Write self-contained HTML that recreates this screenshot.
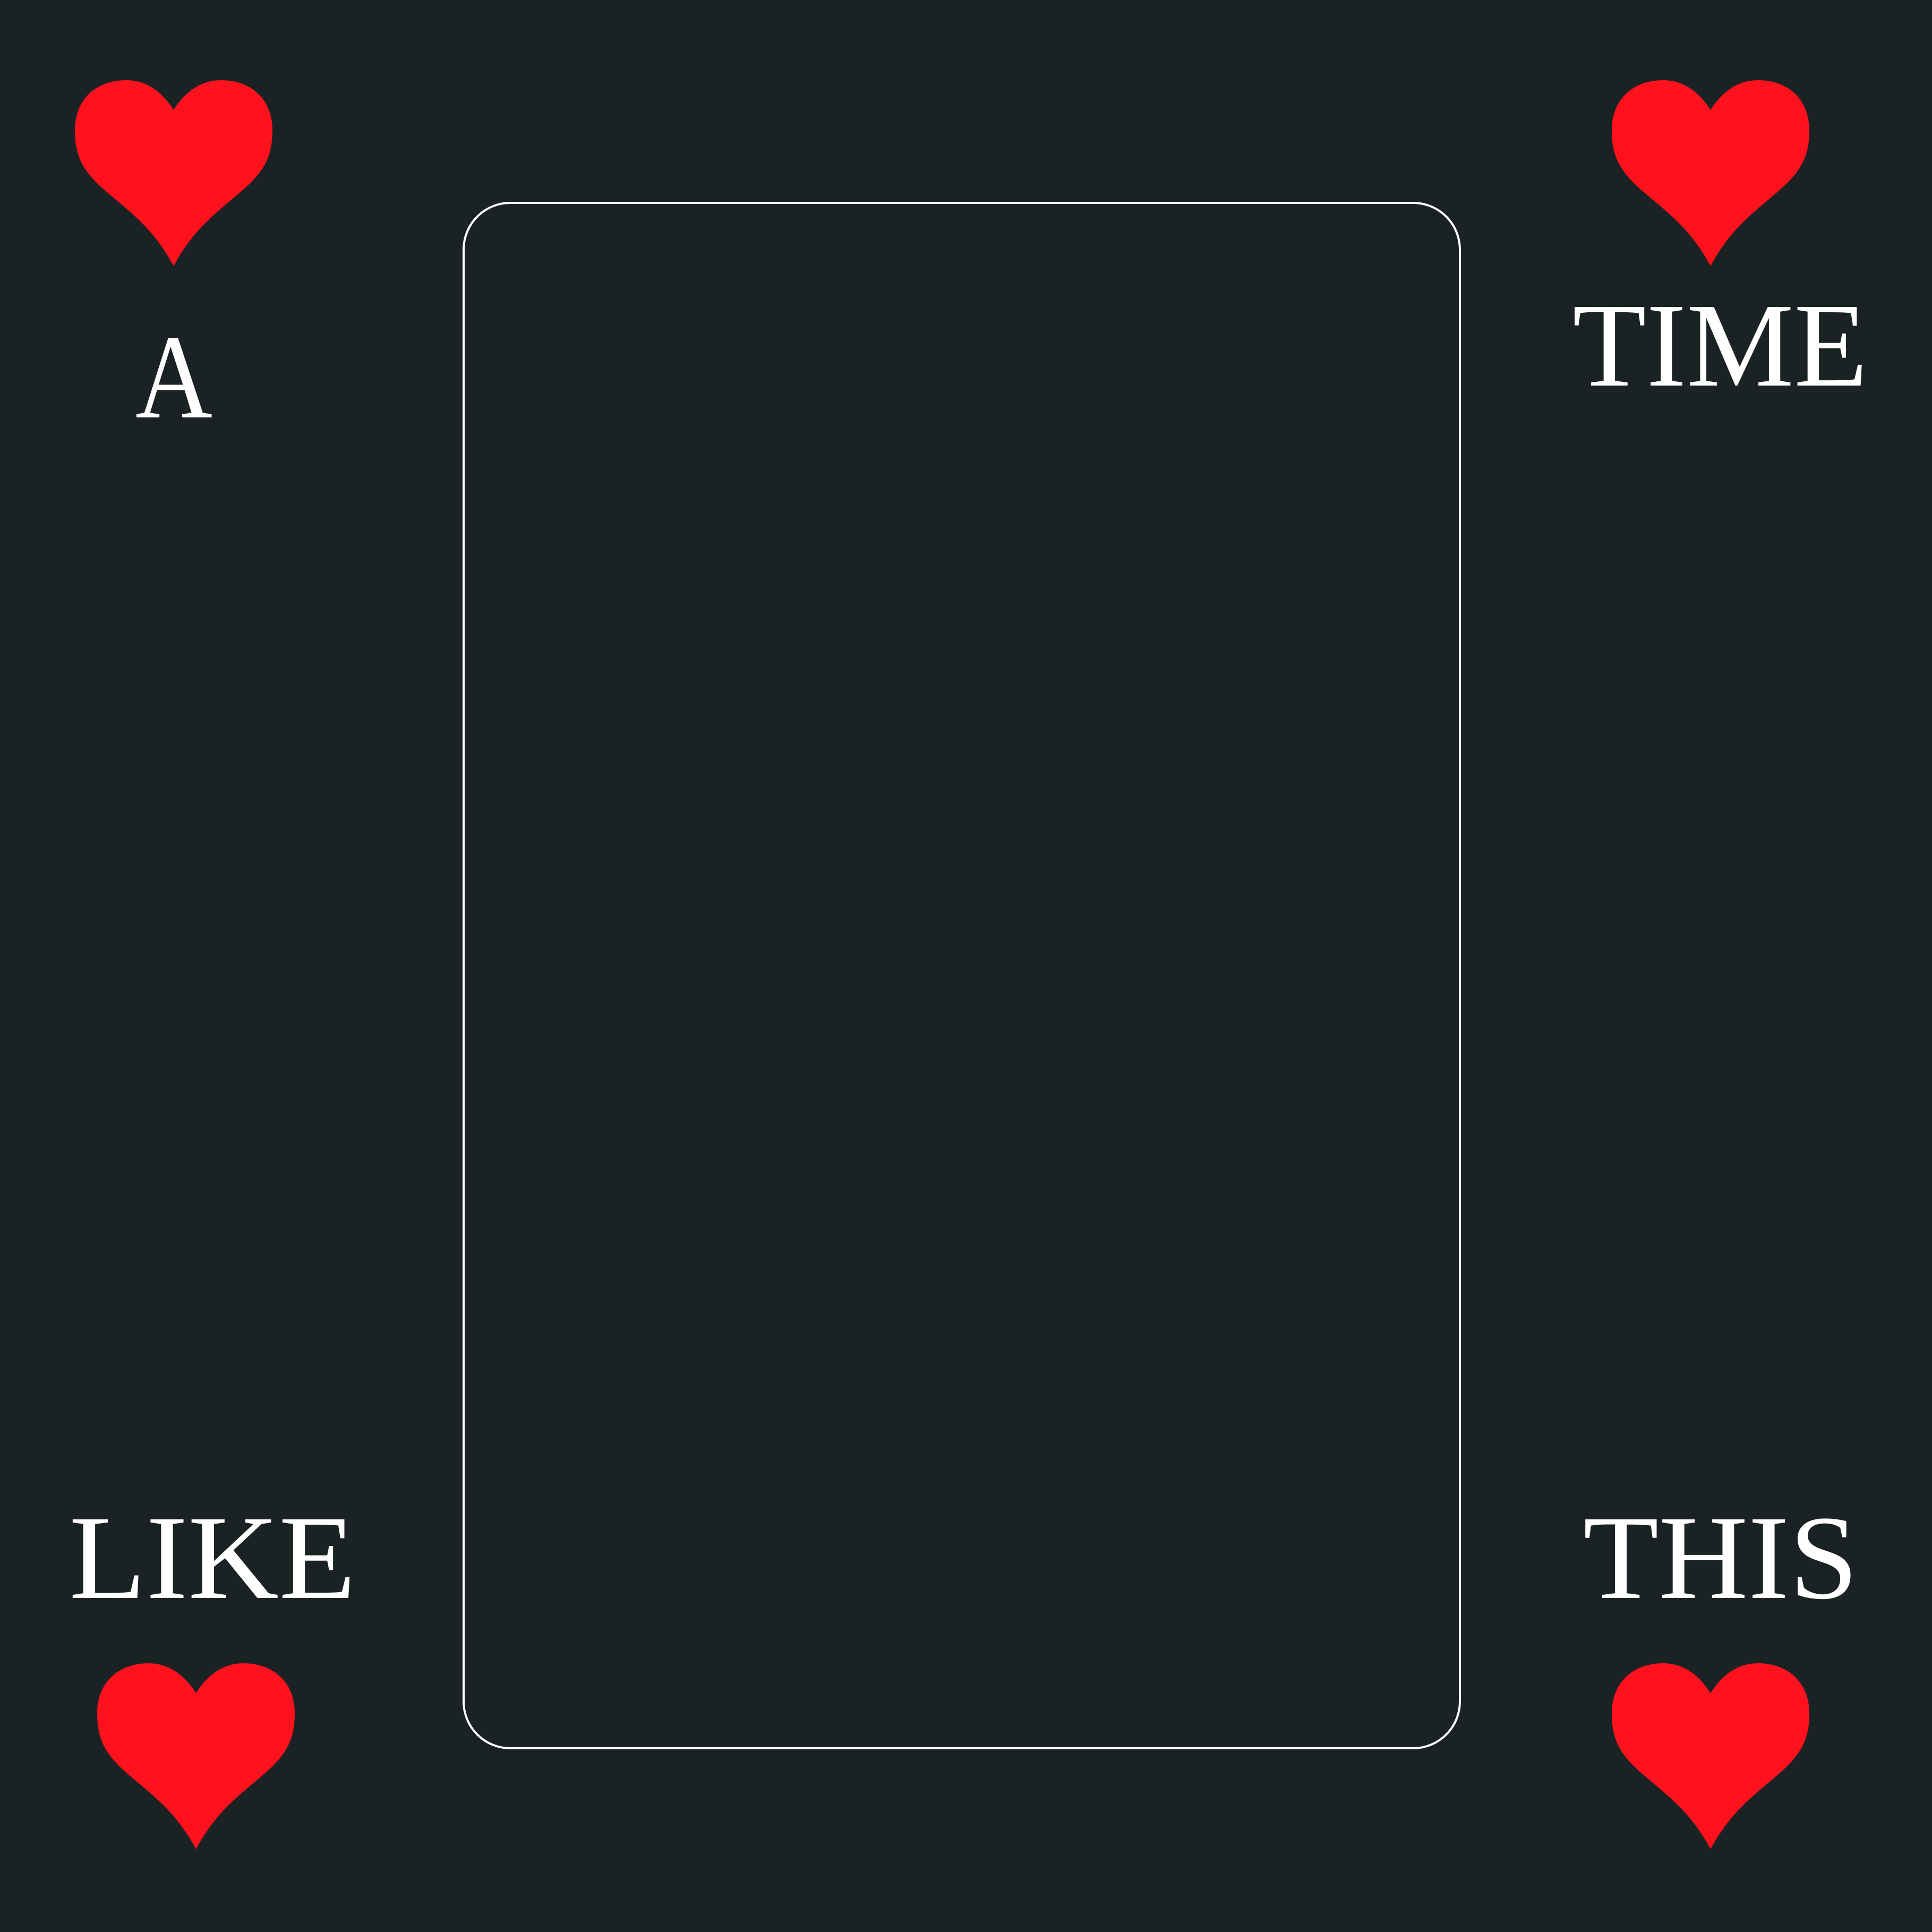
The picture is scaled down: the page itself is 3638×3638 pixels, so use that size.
<!DOCTYPE html>
<html><head><meta charset="utf-8"><style>
html,body{margin:0;padding:0;background:#1b2224;}
svg{display:block}
text{font-family:"Liberation Serif","DejaVu Serif",serif;}
</style></head><body>
<svg width="3638" height="3638" viewBox="0 0 3638 3638" xmlns="http://www.w3.org/2000/svg">
<rect width="3638" height="3638" fill="#1b2224"/>
<defs>
<symbol id="h" viewBox="0 0 100 100" preserveAspectRatio="none">
<path d="M50,16 C44,6 36,0 26,0 C11,0 0,10 0,27 C0,42 5,50 16,60 C28,71 40,80 50,100 C60,80 72,71 84,60 C95,50 100,42 100,27 C100,10 89,0 74,0 C64,0 56,6 50,16 Z" fill="#ff111d"/>
</symbol>
</defs>
<use href="#h" x="141" y="151" width="372" height="350"/>
<use href="#h" x="3035" y="151" width="372" height="350"/>
<use href="#h" x="183" y="3132" width="372" height="350"/>
<use href="#h" x="3035" y="3132" width="372" height="350"/>
<rect x="873" y="382" width="1876" height="2910" rx="88" ry="88" fill="none" stroke="#ffffff" stroke-width="4"/>
<g fill="#ffffff" font-size="226">
<text x="255" y="786" textLength="145" lengthAdjust="spacingAndGlyphs">A</text>
<text x="2961" y="726" textLength="556" lengthAdjust="spacingAndGlyphs">TIME</text>
<text x="130" y="3009" textLength="540" lengthAdjust="spacingAndGlyphs">LIKE</text>
<text x="2981" y="3009" textLength="518" lengthAdjust="spacingAndGlyphs">THIS</text>
</g>
</svg>
</body></html>
